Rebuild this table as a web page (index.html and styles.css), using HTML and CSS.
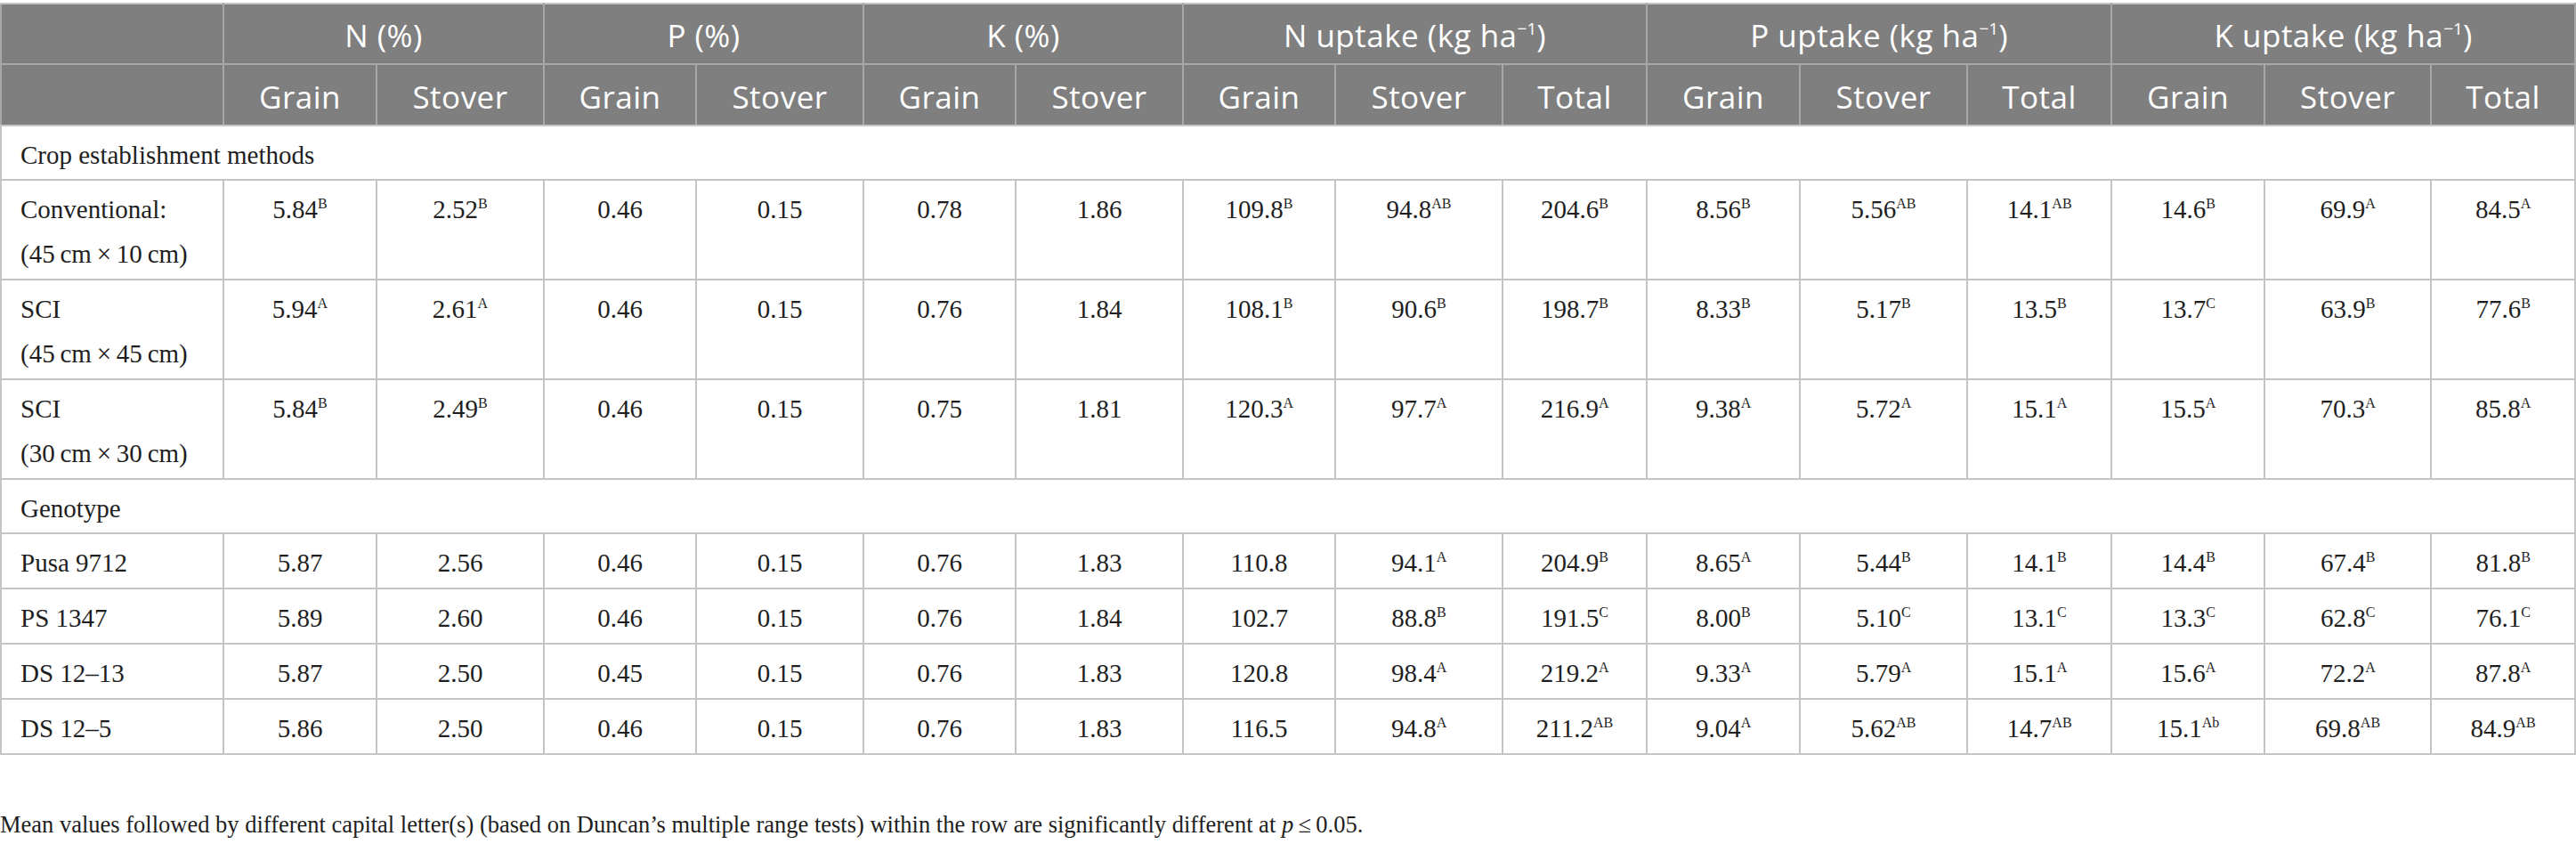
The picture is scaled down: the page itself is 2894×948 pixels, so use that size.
FILE: index.html
```html
<!DOCTYPE html>
<html lang="en">
<head>
  <meta charset="UTF-8" />
  <meta name="viewport" content="width=device-width, initial-scale=1.0"/>
  <title>Nutrient content and uptake</title>
  <link rel="stylesheet" href="styles.css">
</head>
<body>
  <div class="wrap">
    <table class="data">
      <colgroup>
        <col style="width:250px"><col style="width:172px"><col style="width:188px">
        <col style="width:171px"><col style="width:188px"><col style="width:171px">
        <col style="width:188px"><col style="width:171px"><col style="width:188px">
        <col style="width:162px"><col style="width:172px"><col style="width:188px">
        <col style="width:162px"><col style="width:172px"><col style="width:187px">
        <col style="width:162px">
      </colgroup>
      <thead>
        <tr class="head1">
          <th></th>
          <th colspan="2">N (%)</th>
          <th colspan="2">P (%)</th>
          <th colspan="2">K (%)</th>
          <th colspan="3">N uptake (kg ha<sup>−1</sup>)</th>
          <th colspan="3">P uptake (kg ha<sup>−1</sup>)</th>
          <th colspan="3">K uptake (kg ha<sup>−1</sup>)</th>
        </tr>
        <tr class="head2">
          <th></th>
          <th>Grain</th><th>Stover</th>
          <th>Grain</th><th>Stover</th>
          <th>Grain</th><th>Stover</th>
          <th>Grain</th><th>Stover</th><th>Total</th>
          <th>Grain</th><th>Stover</th><th>Total</th>
          <th>Grain</th><th>Stover</th><th>Total</th>
        </tr>
      </thead>
      <tbody>
        <tr class="group"><td colspan="16">Crop establishment methods</td></tr>
        <tr>
          <td class="name">Conventional:<br>(45&#8201;cm&#8201;×&#8201;10&#8201;cm)</td>
          <td>5.84<sup>B</sup></td><td>2.52<sup>B</sup></td>
          <td>0.46</td><td>0.15</td>
          <td>0.78</td><td>1.86</td>
          <td>109.8<sup>B</sup></td><td>94.8<sup>AB</sup></td><td>204.6<sup>B</sup></td>
          <td>8.56<sup>B</sup></td><td>5.56<sup>AB</sup></td><td>14.1<sup>AB</sup></td>
          <td>14.6<sup>B</sup></td><td>69.9<sup>A</sup></td><td>84.5<sup>A</sup></td>
        </tr>
        <tr>
          <td class="name">SCI<br>(45&#8201;cm&#8201;×&#8201;45&#8201;cm)</td>
          <td>5.94<sup>A</sup></td><td>2.61<sup>A</sup></td>
          <td>0.46</td><td>0.15</td>
          <td>0.76</td><td>1.84</td>
          <td>108.1<sup>B</sup></td><td>90.6<sup>B</sup></td><td>198.7<sup>B</sup></td>
          <td>8.33<sup>B</sup></td><td>5.17<sup>B</sup></td><td>13.5<sup>B</sup></td>
          <td>13.7<sup>C</sup></td><td>63.9<sup>B</sup></td><td>77.6<sup>B</sup></td>
        </tr>
        <tr>
          <td class="name">SCI<br>(30&#8201;cm&#8201;×&#8201;30&#8201;cm)</td>
          <td>5.84<sup>B</sup></td><td>2.49<sup>B</sup></td>
          <td>0.46</td><td>0.15</td>
          <td>0.75</td><td>1.81</td>
          <td>120.3<sup>A</sup></td><td>97.7<sup>A</sup></td><td>216.9<sup>A</sup></td>
          <td>9.38<sup>A</sup></td><td>5.72<sup>A</sup></td><td>15.1<sup>A</sup></td>
          <td>15.5<sup>A</sup></td><td>70.3<sup>A</sup></td><td>85.8<sup>A</sup></td>
        </tr>
        <tr class="group"><td colspan="16">Genotype</td></tr>
        <tr>
          <td class="name">Pusa 9712</td>
          <td>5.87</td><td>2.56</td>
          <td>0.46</td><td>0.15</td>
          <td>0.76</td><td>1.83</td>
          <td>110.8</td><td>94.1<sup>A</sup></td><td>204.9<sup>B</sup></td>
          <td>8.65<sup>A</sup></td><td>5.44<sup>B</sup></td><td>14.1<sup>B</sup></td>
          <td>14.4<sup>B</sup></td><td>67.4<sup>B</sup></td><td>81.8<sup>B</sup></td>
        </tr>
        <tr>
          <td class="name">PS 1347</td>
          <td>5.89</td><td>2.60</td>
          <td>0.46</td><td>0.15</td>
          <td>0.76</td><td>1.84</td>
          <td>102.7</td><td>88.8<sup>B</sup></td><td>191.5<sup>C</sup></td>
          <td>8.00<sup>B</sup></td><td>5.10<sup>C</sup></td><td>13.1<sup>C</sup></td>
          <td>13.3<sup>C</sup></td><td>62.8<sup>C</sup></td><td>76.1<sup>C</sup></td>
        </tr>
        <tr>
          <td class="name">DS 12–13</td>
          <td>5.87</td><td>2.50</td>
          <td>0.45</td><td>0.15</td>
          <td>0.76</td><td>1.83</td>
          <td>120.8</td><td>98.4<sup>A</sup></td><td>219.2<sup>A</sup></td>
          <td>9.33<sup>A</sup></td><td>5.79<sup>A</sup></td><td>15.1<sup>A</sup></td>
          <td>15.6<sup>A</sup></td><td>72.2<sup>A</sup></td><td>87.8<sup>A</sup></td>
        </tr>
        <tr>
          <td class="name">DS 12–5</td>
          <td>5.86</td><td>2.50</td>
          <td>0.46</td><td>0.15</td>
          <td>0.76</td><td>1.83</td>
          <td>116.5</td><td>94.8<sup>A</sup></td><td>211.2<sup>AB</sup></td>
          <td>9.04<sup>A</sup></td><td>5.62<sup>AB</sup></td><td>14.7<sup>AB</sup></td>
          <td>15.1<sup>Ab</sup></td><td>69.8<sup>AB</sup></td><td>84.9<sup>AB</sup></td>
        </tr>
      </tbody>
    </table>

    <p class="note">Mean values followed by different capital letter(s) (based on Duncan’s multiple range tests) within the row are significantly different at <i>p</i>&#8201;≤&#8201;0.05.</p>
  </div>
</body>
</html>
```

FILE: styles.css
```css
body {
  margin: 0;
  padding-top: 3px;
  background: white;
  font-family: "Liberation Serif", "Times New Roman", serif;
  color: #1e1e1e;
}
.data {
  width: 2892px;
  table-layout: fixed;
  border-collapse: collapse;
}
.data th {
  background: #7f7f7f;
  color: white;
  font-family: "Open Sans", sans-serif;
  font-weight: normal;
  font-size: 35px;
  letter-spacing: 0.5px;
  border: 2px solid #a8a8a8;
  padding: 3px 0 0;
  text-align: center;
  vertical-align: middle;
}
.data .head1 th {
  height: 63px;
  border-top-color: #c4c4c4;
}
.data .head2 th {
  height: 64px;
  border-bottom-color: #c4c4c4;
}
.data th sup {
  font-size: 19px;
  line-height: 0;
  vertical-align: 14px;
  letter-spacing: 0;
}
.data td {
  border: 2px solid #c4c4c4;
  font-size: 29px;
  line-height: 50px;
  padding: 7px 10px 3px;
  text-align: center;
  vertical-align: top;
}
.data td.name,
.data .group td {
  text-align: left;
  padding-left: 21px;
}
.data .group td {
  padding-bottom: 2px;
}
.data td sup {
  font-size: 16px;
  line-height: 0;
  vertical-align: 11px;
}
.note {
  margin: 63px 0 0;
  font-size: 26.5px;
}
```
